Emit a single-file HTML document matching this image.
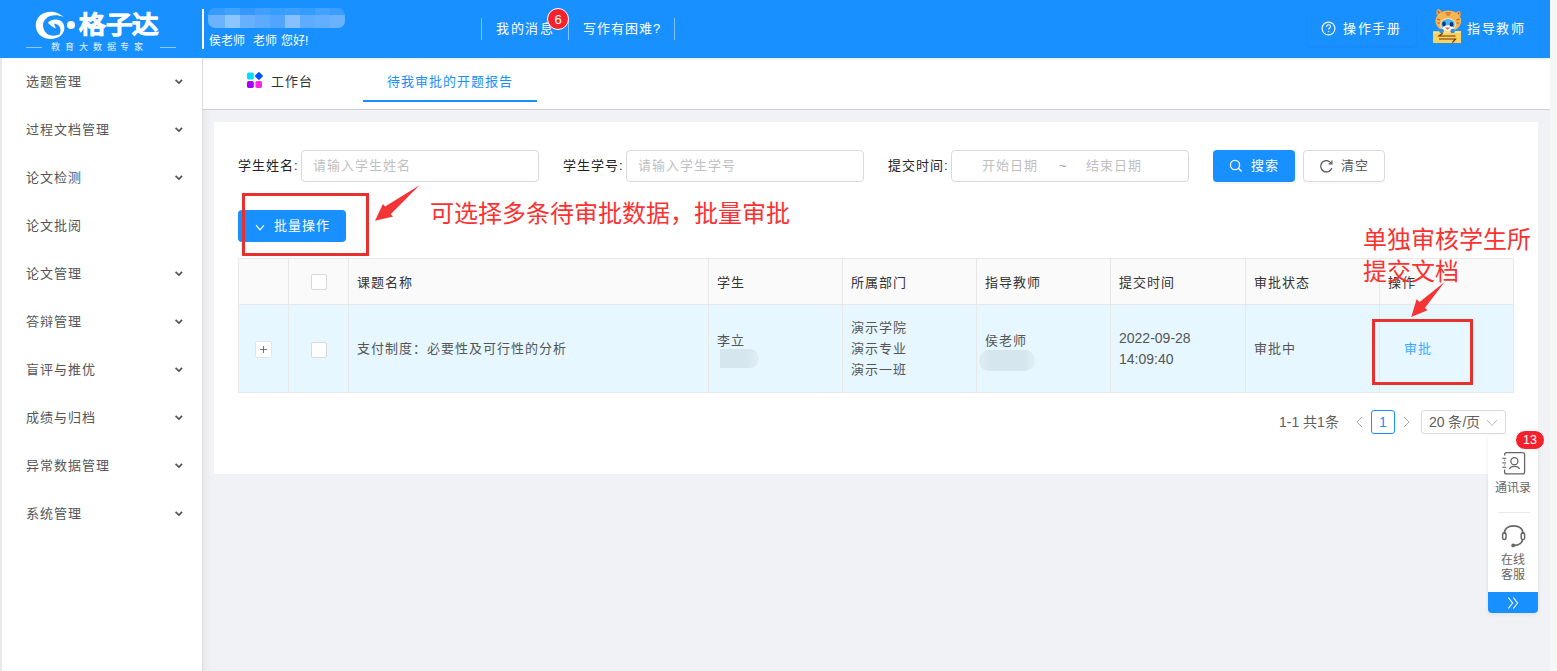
<!DOCTYPE html>
<html lang="zh-CN"><head><meta charset="utf-8">
<style>
*{margin:0;padding:0;box-sizing:border-box}
html,body{width:1557px;height:671px;overflow:hidden;background:#f0f2f5;font-family:"Liberation Sans",sans-serif;color:#333}
.abs{position:absolute}
#hdr{position:absolute;left:0;top:0;width:1550px;height:58px;background:#1890ff}
#sb{position:absolute;left:0;top:58px;width:203px;height:613px;background:#fff;border-left:2px solid #e8e8e8;border-right:1px solid #dcdcdc}
#sb .it{position:absolute;left:24px;height:48px;line-height:48px;font-size:13px;letter-spacing:1px;color:#555;width:170px}
#sb .it svg{position:absolute;left:148px;top:20px}
#scroll{position:absolute;left:1550px;top:0;width:7px;height:671px;background:#f6f6f7}
#tabs{position:absolute;left:203px;top:58px;width:1347px;height:52px;background:#fff;border-bottom:1px solid #cfcfcf}
#card{position:absolute;left:214px;top:122px;width:1324px;height:352px;background:#fff}
.lbl{position:absolute;font-size:13px;letter-spacing:1px;color:#222;line-height:20px}
.inp{position:absolute;height:32px;border:1px solid #d9d9d9;border-radius:4px;background:#fff;font-size:13px;letter-spacing:1px;color:#bfbfbf;line-height:30px}
.btn{position:absolute;height:32px;border-radius:4px;font-size:13px;letter-spacing:1px;line-height:30px}
.red{color:#fa3232;font-size:24px;position:absolute;line-height:28px;white-space:nowrap}
.rbox{position:absolute;border:3px solid #e8312f}
table{position:absolute;left:238px;top:258px;border-collapse:collapse;font-size:13px;letter-spacing:1px}
td,th{border:1px solid #e8e8e8;font-weight:normal;text-align:left;vertical-align:middle;padding:0 8px;color:#555}
th{background:#fafafa;height:46px;color:#333}
tr.b td{background:#e6f7ff;height:88px;line-height:21px}
.cb{display:inline-block;width:16px;height:16px;border:1px solid #d9d9d9;border-radius:2px;background:#fff;vertical-align:middle}
</style></head><body>
<div id="hdr">
  <svg class="abs" style="left:30px;top:5px" width="50" height="40" viewBox="0 0 50 40">
    <path d="M33.7 12.2 C28 6 17 4.5 10 10.5 C4 16 4.5 26 11 31 C17 35.5 26 34.5 31 30.5 L28.5 29.5 C22 32.5 14 30 13 21 C12.5 13 22 7 33.7 12.2 Z" fill="#fff"/>
    <path d="M17.9 17.6 C21 14.5 26 13.5 30 15.5 C34 17.5 35 22 34 25.5 C33 29 30.5 31 28 32 C31 28 31.5 23 28.5 20.5 C27 19 25 18.5 24 18.7 C24.5 20 25.5 22 25.8 23.5 C22.5 22 19.5 20 17.9 17.6 Z" fill="#fff"/>
  </svg>
  <div class="abs" style="left:67px;top:21px;width:8px;height:8px;border-radius:50%;background:#fff"></div>
  <div class="abs" style="left:79px;top:9px;font-size:26px;line-height:34px;font-weight:900;color:#fff;letter-spacing:0px;transform:scale(1.02,0.93);transform-origin:left top;-webkit-text-stroke:0.8px #fff">格子达</div>
  <div class="abs" style="left:26px;top:47px;width:16px;height:1px;background:rgba(255,255,255,.5)"></div>
  <div class="abs" style="left:160px;top:47px;width:16px;height:1px;background:rgba(255,255,255,.5)"></div>
  <div class="abs" style="left:51px;top:42px;font-size:9px;line-height:11px;color:#e8f3ff;letter-spacing:4.9px;white-space:nowrap">教育大数据专家</div>
  <div class="abs" style="left:202px;top:9px;width:2px;height:40px;background:#fff"></div>
  <div class="abs" style="left:208px;top:8px;width:137px;height:20px;border-radius:7px;overflow:hidden">
    <div class="abs" style="left:0px;top:0;width:17px;height:7px;background:#3a9bff"></div><div class="abs" style="left:0px;top:7px;width:17px;height:13px;background:#6cb3ff"></div>
    <div class="abs" style="left:17px;top:0;width:15px;height:7px;background:#42a2ff"></div><div class="abs" style="left:17px;top:7px;width:15px;height:13px;background:#8cc5ff"></div>
    <div class="abs" style="left:32px;top:0;width:15px;height:7px;background:#3399ff"></div><div class="abs" style="left:32px;top:7px;width:15px;height:13px;background:#66b0ff"></div>
    <div class="abs" style="left:47px;top:0;width:15px;height:7px;background:#40a0ff"></div><div class="abs" style="left:47px;top:7px;width:15px;height:13px;background:#5dabff"></div>
    <div class="abs" style="left:62px;top:0;width:15px;height:7px;background:#379dff"></div><div class="abs" style="left:62px;top:7px;width:15px;height:13px;background:#52a5ff"></div>
    <div class="abs" style="left:77px;top:0;width:15px;height:7px;background:#3d9fff"></div><div class="abs" style="left:77px;top:7px;width:15px;height:13px;background:#86c0ff"></div>
    <div class="abs" style="left:92px;top:0;width:15px;height:7px;background:#359cff"></div><div class="abs" style="left:92px;top:7px;width:15px;height:13px;background:#5eacff"></div>
    <div class="abs" style="left:107px;top:0;width:15px;height:7px;background:#42a2ff"></div><div class="abs" style="left:107px;top:7px;width:15px;height:13px;background:#62aeff"></div>
    <div class="abs" style="left:122px;top:0;width:15px;height:7px;background:#3b9eff"></div><div class="abs" style="left:122px;top:7px;width:15px;height:13px;background:#6ab2ff"></div>
  </div>
  <div class="abs" style="left:209px;top:33px;font-size:12px;line-height:16px;color:#fff;white-space:nowrap;letter-spacing:0.2px">侯老师&nbsp; 老师 您好!</div>
  <div class="abs" style="left:481px;top:18px;width:1px;height:22px;background:rgba(255,255,255,.45)"></div>
  <div class="abs" style="left:568px;top:18px;width:1px;height:22px;background:rgba(255,255,255,.45)"></div>
  <div class="abs" style="left:674px;top:18px;width:1px;height:22px;background:rgba(255,255,255,.45)"></div>
  <div class="abs" style="left:496px;top:20px;font-size:13px;letter-spacing:1.5px;line-height:18px;color:#fff;white-space:nowrap">我的消息</div>
  <div class="abs" style="left:547px;top:8px;width:22px;height:22px;border-radius:50%;background:#f5222d;border:1px solid #fff;color:#fff;font-size:13px;line-height:22px;text-align:center">6</div>
  <div class="abs" style="left:583px;top:20px;font-size:13px;letter-spacing:1px;line-height:18px;color:#fff;white-space:nowrap">写作有困难?</div>
  <div class="abs" style="left:1307px;top:14px;width:109px;height:32px;border-radius:4px;box-shadow:0 1px 2px rgba(0,40,120,.07)"></div>
  <svg class="abs" style="left:1321px;top:21px" width="15" height="15" viewBox="0 0 15 15"><circle cx="7.5" cy="7.5" r="6.4" stroke="#fff" stroke-width="1.1" fill="none"/><path d="M5.5 5.8 C5.5 4.5 6.4 3.8 7.5 3.8 C8.7 3.8 9.5 4.6 9.5 5.6 C9.5 6.9 7.6 7.1 7.6 8.6" stroke="#fff" stroke-width="1.1" fill="none"/><circle cx="7.6" cy="10.6" r=".7" fill="#fff"/></svg>
  <div class="abs" style="left:1343px;top:20px;font-size:13px;letter-spacing:1.5px;line-height:18px;color:#fff;white-space:nowrap">操作手册</div>
  <svg class="abs" style="left:1428px;top:5px" width="40" height="42" viewBox="0 0 40 42">
    <path d="M8.5 10 C8 6 9 3.8 10.5 4 C12 4.3 13.5 6 14 8 Z" fill="#f2a444"/>
    <path d="M32.5 11 C33 8 32.5 6 31 6 C29.5 6 27.5 7.5 26.5 9.5 Z" fill="#f2a444"/>
    <path d="M10 6 L11.5 8.5 M31 7.5 L30 9.5" stroke="#a8521c" stroke-width="1.2"/>
    <ellipse cx="20.3" cy="16" rx="12.8" ry="10.5" fill="#f6b453"/>
    <path d="M17.5 8 H23 M18.5 10 H22 M9 14 L12 15 M9.5 18 L12 18 M31.5 14 L28.5 15 M31 18 L28.5 18" stroke="#b8601e" stroke-width="1.1"/>
    <ellipse cx="20" cy="19.5" rx="8" ry="6.5" fill="#fbe7b8"/>
    <ellipse cx="20" cy="19.5" rx="6.8" ry="5.6" fill="#48b5f0"/>
    <ellipse cx="20" cy="23" rx="5.5" ry="2.8" fill="#fff"/>
    <ellipse cx="16" cy="19" rx="1.8" ry="2.4" fill="#12307a"/>
    <ellipse cx="23.5" cy="19.4" rx="1.8" ry="2.4" fill="#12307a"/>
    <path d="M17 22.5 H22 L19.5 24.8 Z" fill="#f2582a"/>
    <path d="M5 26.5 L33 26 L33 38 L5 38 Z" fill="#f9d35a"/>
    <path d="M5 26.5 L33 26 L33 28 L5 28.3 Z" fill="#fce08a"/>
    <circle cx="13.5" cy="26" r="2.3" fill="#2f8fe8"/>
    <circle cx="24.7" cy="26" r="2.3" fill="#2f8fe8"/>
    <path d="M14.7 28.2 L11 31 H27.5 M11 34 H27.5 L24.4 37.6" stroke="#7a2f0c" stroke-width="1.2" fill="none"/>
  </svg>
  <div class="abs" style="left:1467px;top:20px;font-size:13px;letter-spacing:1.5px;line-height:18px;color:#fff;white-space:nowrap">指导教师</div>
</div>
<div id="scroll"></div>
<div id="sb">
  <div class="it" style="top:0">选题管理<svg width="10" height="8"><path d="M1.6 1.9 L4.9 5.1 L8.1 1.8" stroke="#555" stroke-width="1.7" fill="none"/></svg></div>
  <div class="it" style="top:48px">过程文档管理<svg width="10" height="8"><path d="M1.6 1.9 L4.9 5.1 L8.1 1.8" stroke="#555" stroke-width="1.7" fill="none"/></svg></div>
  <div class="it" style="top:96px">论文检测<svg width="10" height="8"><path d="M1.6 1.9 L4.9 5.1 L8.1 1.8" stroke="#555" stroke-width="1.7" fill="none"/></svg></div>
  <div class="it" style="top:144px">论文批阅</div>
  <div class="it" style="top:192px">论文管理<svg width="10" height="8"><path d="M1.6 1.9 L4.9 5.1 L8.1 1.8" stroke="#555" stroke-width="1.7" fill="none"/></svg></div>
  <div class="it" style="top:240px">答辩管理<svg width="10" height="8"><path d="M1.6 1.9 L4.9 5.1 L8.1 1.8" stroke="#555" stroke-width="1.7" fill="none"/></svg></div>
  <div class="it" style="top:288px">盲评与推优<svg width="10" height="8"><path d="M1.6 1.9 L4.9 5.1 L8.1 1.8" stroke="#555" stroke-width="1.7" fill="none"/></svg></div>
  <div class="it" style="top:336px">成绩与归档<svg width="10" height="8"><path d="M1.6 1.9 L4.9 5.1 L8.1 1.8" stroke="#555" stroke-width="1.7" fill="none"/></svg></div>
  <div class="it" style="top:384px">异常数据管理<svg width="10" height="8"><path d="M1.6 1.9 L4.9 5.1 L8.1 1.8" stroke="#555" stroke-width="1.7" fill="none"/></svg></div>
  <div class="it" style="top:432px">系统管理<svg width="10" height="8"><path d="M1.6 1.9 L4.9 5.1 L8.1 1.8" stroke="#555" stroke-width="1.7" fill="none"/></svg></div>
</div>
<div id="tabs">
  <div class="abs" style="left:0;top:0;width:1347px;height:3px;background:linear-gradient(#ececec,#fff)"></div>
  <svg class="abs" style="left:44px;top:14px" width="18" height="18" viewBox="0 0 18 18">
    <rect x="0" y="0.6" width="6.8" height="7" rx="1.6" fill="#00defa"/>
    <rect x="8.8" y="0.9" width="6.2" height="6.2" rx="1.1" fill="#0050ff" transform="rotate(45 11.9 4)"/>
    <rect x="0" y="8.9" width="6.8" height="7" rx="1.6" fill="#a600f5"/>
    <rect x="8.4" y="8.9" width="6.6" height="7" rx="1.6" fill="#ff24e8"/>
  </svg>
  <div class="abs" style="left:68px;top:14px;font-size:13px;letter-spacing:1px;line-height:20px;color:#333;white-space:nowrap">工作台</div>
  <div class="abs" style="left:184px;top:14px;font-size:13px;letter-spacing:1px;line-height:20px;color:#1890ff;white-space:nowrap">待我审批的开题报告</div>
  <div class="abs" style="left:160px;top:42px;width:174px;height:2px;background:#1890ff"></div>
</div>
<div class="abs" style="left:203px;top:110px;width:8px;height:561px;background:linear-gradient(90deg,rgba(0,0,0,.035),rgba(0,0,0,0))"></div>
<div id="card"></div>
<div class="lbl" style="left:238px;top:156px">学生姓名:</div>
<div class="inp" style="left:301px;top:150px;width:238px;padding-left:11px">请输入学生姓名</div>
<div class="lbl" style="left:563px;top:156px">学生学号:</div>
<div class="inp" style="left:626px;top:150px;width:238px;padding-left:11px">请输入学生学号</div>
<div class="lbl" style="left:888px;top:156px">提交时间:</div>
<div class="inp" style="left:951px;top:150px;width:238px">
  <span class="abs" style="left:30px;top:0">开始日期</span><span class="abs" style="left:107px;top:0;color:#999">~</span><span class="abs" style="left:134px;top:0">结束日期</span>
</div>
<div class="btn" style="left:1213px;top:150px;width:82px;background:#1890ff;color:#fff;box-shadow:0 2px 0 rgba(0,0,0,.04)">
  <svg class="abs" style="left:16px;top:9px" width="14" height="14" viewBox="0 0 14 14"><circle cx="6" cy="6" r="4.6" stroke="#fff" stroke-width="1.3" fill="none"/><path d="M9.3 9.3 L12.6 12.6" stroke="#fff" stroke-width="1.4"/></svg>
  <span class="abs" style="left:38px;top:1px">搜索</span>
</div>
<div class="btn" style="left:1303px;top:150px;width:82px;background:#fff;border:1px solid #d9d9d9;color:#555;box-shadow:0 2px 0 rgba(0,0,0,.015)">
  <svg class="abs" style="left:15px;top:8px" width="15" height="15" viewBox="0 0 15 15"><path d="M12.2 4.2 A5.7 5.7 0 1 0 12.8 9" stroke="#555" stroke-width="1.2" fill="none"/><path d="M12.9 1.6 L12.9 4.9 L9.6 4.9" stroke="#555" stroke-width="1.2" fill="none"/></svg>
  <span class="abs" style="left:37px;top:0">清空</span>
</div>
<div class="btn" style="left:238px;top:210px;width:108px;background:#1890ff;color:#fff">
  <svg class="abs" style="left:17px;top:14px" width="10" height="8" viewBox="0 0 10 8"><path d="M1 1.2 L5 5.8 L9 1.2" stroke="#fff" stroke-width="1.1" fill="none"/></svg>
  <span class="abs" style="left:36px;top:1px;font-weight:500">批量操作</span>
</div>
<table>
<tr><th style="width:50px"></th><th style="width:60px;text-align:center"><span class="cb"></span></th><th style="width:360px">课题名称</th><th style="width:134px">学生</th><th style="width:134px">所属部门</th><th style="width:134px">指导教师</th><th style="width:135px">提交时间</th><th style="width:134px">审批状态</th><th style="width:134px">操作</th></tr>
<tr class="b"><td style="text-align:center"><span class="cb" style="width:17px;height:17px;position:relative;border-color:#e4e4e4"><svg style="position:absolute;left:3px;top:3px" width="9" height="9" viewBox="0 0 9 9"><path d="M4.5 1 V8 M1 4.5 H8" stroke="#666" stroke-width="0.9"/></svg></span></td><td style="text-align:center"><span class="cb"></span></td><td>支付制度：必要性及可行性的分析</td><td><div style="margin-top:-17px">李立</div></td><td>演示学院<br>演示专业<br>演示一班</td><td><div style="margin-top:-17px">侯老师</div></td><td style="font-size:14px;letter-spacing:0">2022-09-28<br>14:09:40</td><td>审批中</td><td style="padding-left:24px;color:#40a9ff">审批</td></tr>
</table>
<div class="abs" style="left:720px;top:349px;width:39px;height:19px;border-radius:0 10px 10px 0;background:linear-gradient(90deg,#d6e6ee 0,#d6e6ee 65%,#e0eef4 100%)"></div>
<div class="abs" style="left:979px;top:350px;width:56px;height:21px;border-radius:10px;background:linear-gradient(90deg,#e0eef4 0,#d6e6ee 20%,#d6e6ee 80%,#e2eff5 100%)"></div>
<div class="abs" style="left:1279px;top:412px;font-size:14px;line-height:20px;color:#606060;white-space:nowrap">1-1 共1条</div>
<svg class="abs" style="left:1354px;top:415px" width="10" height="14" viewBox="0 0 10 14"><path d="M8 2 L3 7 L8 12" stroke="#aaa" stroke-width="1" fill="none"/></svg>
<div class="abs" style="left:1371px;top:410px;width:24px;height:24px;border:1px solid #1890ff;border-radius:3px;font-size:14px;line-height:22px;text-align:center;color:#1890ff;background:#fff">1</div>
<svg class="abs" style="left:1402px;top:415px" width="10" height="14" viewBox="0 0 10 14"><path d="M2 2 L7 7 L2 12" stroke="#aaa" stroke-width="1" fill="none"/></svg>
<div class="abs" style="left:1421px;top:410px;width:85px;height:24px;border:1px solid #d9d9d9;border-radius:3px;font-size:14px;line-height:22px;color:#606060;background:#fff;padding-left:7px;white-space:nowrap">20 条/页
  <svg class="abs" style="left:64px;top:8px" width="12" height="8" viewBox="0 0 12 8"><path d="M1 1 L6 6.5 L11 1" stroke="#bbb" stroke-width="1" fill="none"/></svg>
</div>

<div class="abs" style="left:1488px;top:435px;width:50px;height:178px;background:#fff;border-radius:0 0 4px 4px;box-shadow:0 1px 5px rgba(0,0,0,.08);overflow:hidden">
  <svg class="abs" style="left:12px;top:14px" width="26" height="26" viewBox="1500 449 26 26">
    <path d="M1504.6 455.5 V454.5 Q1504.6 452.6 1506.5 452.6 H1522.7 Q1524.6 452.6 1524.6 454.5 V472 Q1524.6 473.9 1522.7 473.9 H1506.5 Q1504.6 473.9 1504.6 472 V469.5" stroke="#666" stroke-width="1.3" fill="none"/>
    <path d="M1504.6 459.8 V460.8 M1504.6 464.6 V465.6" stroke="#666" stroke-width="1.3"/>
    <path d="M1502.3 458.3 H1506.2 M1502.3 462.8 H1506.2 M1502.3 467.3 H1506.2" stroke="#777" stroke-width="1.3"/>
    <circle cx="1514.4" cy="461.2" r="3.5" stroke="#666" stroke-width="1.3" fill="none"/>
    <path d="M1509.3 469 C1511 465.6 1518 465.6 1519.6 469" stroke="#666" stroke-width="1.3" fill="none"/>
  </svg>
  <div class="abs" style="left:0;top:45px;width:50px;text-align:center;font-size:12px;line-height:16px;color:#666">通讯录</div>
  <div class="abs" style="left:10px;top:77px;width:32px;height:1px;background:#e8e8e8"></div>
  <svg class="abs" style="left:12px;top:87px" width="27" height="27" viewBox="1500 522 27 27">
    <path d="M1504.3 534 C1504.3 528.8 1508.3 525.9 1513.6 525.9 C1518.9 525.9 1523 528.8 1523 534" stroke="#666" stroke-width="1.8" fill="none"/>
    <rect x="1502.6" y="532.8" width="3.4" height="6.8" rx="1.7" stroke="#666" stroke-width="1.5" fill="none"/>
    <rect x="1521.2" y="532.8" width="3.4" height="6.8" rx="1.7" stroke="#666" stroke-width="1.5" fill="none"/>
    <path d="M1522.6 539.6 C1522 543.2 1519 545.2 1514 545.4" stroke="#666" stroke-width="1.8" fill="none"/>
    <circle cx="1513.2" cy="545.4" r="1.9" fill="#666"/>
  </svg>
  <div class="abs" style="left:0;top:118px;width:50px;text-align:center;font-size:12px;line-height:15px;color:#666">在线<br>客服</div>
  <div class="abs" style="left:0;top:157px;width:50px;height:21px;background:#1890ff"></div>
  <svg class="abs" style="left:19px;top:161px" width="13" height="14" viewBox="0 0 13 14"><path d="M1.3 1.5 L5.6 7 L1.3 12.5 M6.3 1.5 L10.6 7 L6.3 12.5" stroke="#fff" stroke-width="1.1" fill="none"/></svg>
</div>
<div class="abs" style="left:1515px;top:430px;width:30px;height:20px;border-radius:10px;background:#f5222d;border:1px solid #fff;color:#fff;font-size:12.5px;line-height:18px;text-align:center">13</div>
<div class="rbox" style="left:242px;top:193px;width:127px;height:63px"></div>
<svg class="abs" style="left:365px;top:180px" width="60" height="50" viewBox="365 180 60 50"><path d="M419.5 185.3 L385.1 206.5 L382.9 204 L375 220.8 L393.2 216.6 L390.7 214.3 Z" fill="#f53535"/></svg>
<div class="red" style="left:430px;top:200px">可选择多条待审批数据，批量审批</div>
<div class="red" style="left:1363px;top:226px">单独审核学生所</div>
<div class="red" style="left:1363px;top:258px">提交文档</div>
<div class="rbox" style="left:1372px;top:319px;width:101px;height:66px"></div>
<svg class="abs" style="left:1395px;top:270px" width="60" height="55" viewBox="1395 270 60 55"><path d="M1444.6 282 L1419.6 302 L1416.6 299.3 L1411.2 317 L1427.6 310.3 L1424.9 308.1 Z" fill="#f53535"/></svg>
</body></html>
